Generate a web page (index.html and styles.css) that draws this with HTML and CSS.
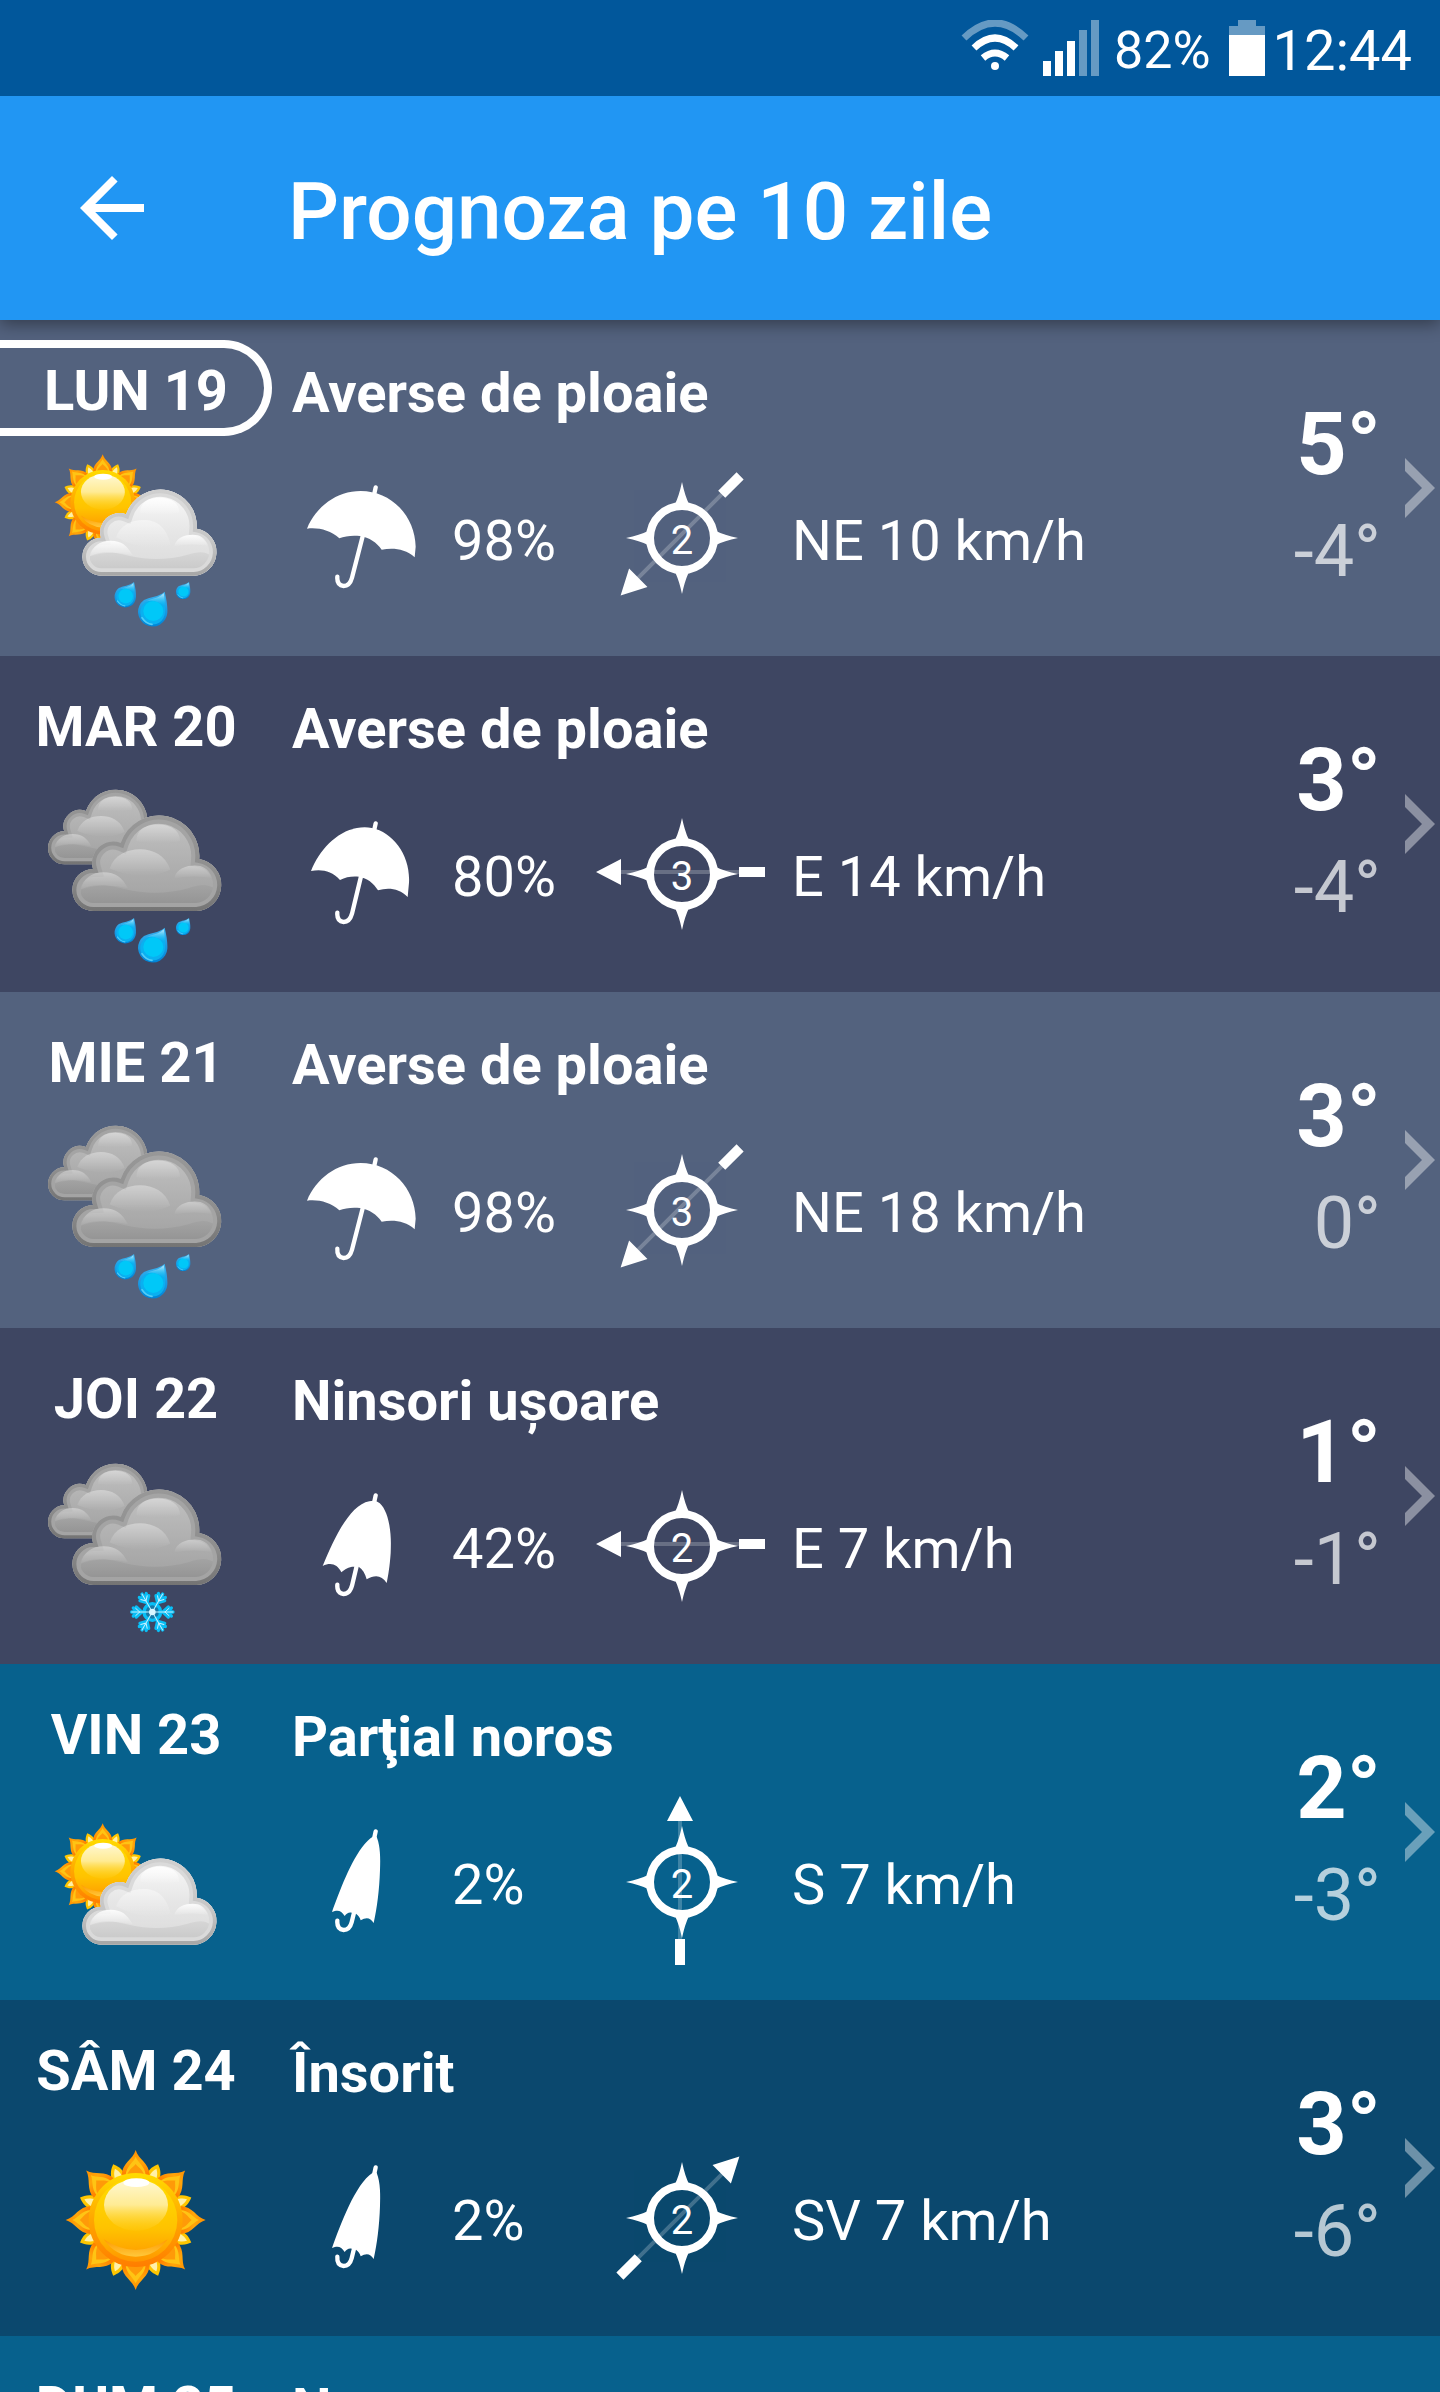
FILE: index.html
```html
<!DOCTYPE html>
<html lang="ro">
<head>
  <meta charset="UTF-8">
  <title>Prognoza pe 10 zile</title>
  <meta name="viewport" content="width=device-width, initial-scale=1.0">
  <link rel="stylesheet" href="styles.css">
</head>
<body>

  <!-- shared drawings -->
  <svg class="defs" aria-hidden="true">
    <defs>
      <linearGradient id="white-fill" x1="0" y1="0" x2="0" y2="1">
        <stop offset="0" stop-color="#fafafa"/>
        <stop offset="0.5" stop-color="#e6e6e6"/>
        <stop offset="1" stop-color="#dadada"/>
      </linearGradient>
      <linearGradient id="white-rim" x1="0" y1="0" x2="0" y2="257" gradientUnits="userSpaceOnUse">
        <stop offset="0" stop-color="#cfcfcf"/>
        <stop offset="0.6" stop-color="#c6c6c6"/>
        <stop offset="1" stop-color="#a6a6a6"/>
      </linearGradient>
      <linearGradient id="white-base" x1="0" y1="0" x2="0" y2="1">
        <stop offset="0" stop-color="#d6d6d6"/>
        <stop offset="1" stop-color="#c8c8c8"/>
      </linearGradient>
      <linearGradient id="gray-fill" x1="0" y1="0" x2="0" y2="1">
        <stop offset="0" stop-color="#c2c2c2"/>
        <stop offset="0.5" stop-color="#b0b0b0"/>
        <stop offset="1" stop-color="#a0a0a0"/>
      </linearGradient>
      <linearGradient id="gray-rim" x1="0" y1="0" x2="0" y2="257" gradientUnits="userSpaceOnUse">
        <stop offset="0" stop-color="#989898"/>
        <stop offset="0.6" stop-color="#8e8e8e"/>
        <stop offset="1" stop-color="#747474"/>
      </linearGradient>
      <linearGradient id="gray-base" x1="0" y1="0" x2="0" y2="1">
        <stop offset="0" stop-color="#a3a3a3"/>
        <stop offset="1" stop-color="#929292"/>
      </linearGradient>
      <linearGradient id="shine" x1="0" y1="0" x2="0" y2="1">
        <stop offset="0" stop-color="#fff" stop-opacity="0.9"/>
        <stop offset="1" stop-color="#fff" stop-opacity="0"/>
      </linearGradient>
      <linearGradient id="sun-rim" x1="0" y1="0" x2="0" y2="1">
        <stop offset="0" stop-color="#ffdc00"/>
        <stop offset="0.5" stop-color="#ffa600"/>
        <stop offset="1" stop-color="#ff7d00"/>
      </linearGradient>
      <linearGradient id="sun-disc" x1="0" y1="0" x2="0" y2="1">
        <stop offset="0" stop-color="#ffdd00"/>
        <stop offset="0.6" stop-color="#ffc300"/>
        <stop offset="1" stop-color="#ff9600"/>
      </linearGradient>
      <linearGradient id="sun-shine" x1="0" y1="0" x2="0" y2="1">
        <stop offset="0" stop-color="#fff8d2"/>
        <stop offset="0.5" stop-color="#ffeb94"/>
        <stop offset="1" stop-color="#ffcf20" stop-opacity="0.2"/>
      </linearGradient>
      <linearGradient id="sun-glow" x1="0" y1="0" x2="0" y2="1">
        <stop offset="0" stop-color="#ff9a00"/>
        <stop offset="1" stop-color="#ffc83c"/>
      </linearGradient>
      <linearGradient id="petal" x1="0" y1="-210" x2="0" y2="-140" gradientUnits="userSpaceOnUse">
        <stop offset="0" stop-color="#ff8e00"/>
        <stop offset="0.5" stop-color="#ffa60a"/>
        <stop offset="1" stop-color="#ff8200"/>
      </linearGradient>
      <linearGradient id="drop-edge" x1="0" y1="0" x2="0" y2="1">
        <stop offset="0" stop-color="#3cb4f0"/>
        <stop offset="1" stop-color="#0084d6"/>
      </linearGradient>
      <linearGradient id="drop-tip" x1="0" y1="0" x2="0" y2="1">
        <stop offset="0" stop-color="#c8ecfc"/>
        <stop offset="1" stop-color="#10bdf5" stop-opacity="0"/>
      </linearGradient>

      <path id="cloud-shape" d="M57 257A57 57 0 0 1 55 143A57 57 0 0 1 130 73A109 109 0 0 1 342 116A71 71 0 0 1 334 257Z"/>
      <clipPath id="cloud-clip"><use href="#cloud-shape"/></clipPath>

      <g id="cloud-white">
        <use href="#cloud-shape" fill="url(#white-fill)"/>
        <path d="M22 199C60 180 90 186 142 198C200 212 262 209 312 195C350 183 365 184 383 196V246H22Z" fill="url(#white-base)" clip-path="url(#cloud-clip)"/>
        <g clip-path="url(#cloud-clip)">
          <use href="#cloud-shape" fill="none" stroke="#dadada" stroke-width="44"/>
          <use href="#cloud-shape" fill="none" stroke="url(#white-rim)" stroke-width="22"/>
        </g>
        <path d="M172 68C172 38 196 23 230 23S290 38 290 68Q230 80 172 68Z" fill="url(#shine)"/>
        <path d="M100 142C112 106 146 90 182 90S250 106 264 165Q190 190 100 142Z" fill="url(#shine)" opacity="0.5"/>
        <path d="M22 200C28 168 52 152 84 152S134 166 150 196Q80 178 22 200Z" fill="url(#shine)"/>
        <path d="M274 170C280 142 308 134 330 134S366 142 378 168Q320 158 274 170Z" fill="url(#shine)"/>
      </g>

      <g id="cloud-gray">
        <use href="#cloud-shape" fill="url(#gray-fill)"/>
        <path d="M22 199C60 180 90 186 142 198C200 212 262 209 312 195C350 183 365 184 383 196V246H22Z" fill="url(#gray-base)" clip-path="url(#cloud-clip)"/>
        <g clip-path="url(#cloud-clip)">
          <use href="#cloud-shape" fill="none" stroke="#a4a4a4" stroke-width="44"/>
          <use href="#cloud-shape" fill="none" stroke="url(#gray-rim)" stroke-width="22"/>
        </g>
        <g opacity="0.4">
          <path d="M172 68C172 38 196 23 230 23S290 38 290 68Q230 80 172 68Z" fill="url(#shine)"/>
          <path d="M100 142C112 106 146 90 182 90S250 106 264 145Q190 180 100 142Z" fill="url(#shine)"/>
          <path d="M22 200C28 168 52 152 84 152S134 166 150 196Q80 178 22 200Z" fill="url(#shine)"/>
          <path d="M274 170C280 142 308 134 330 134S366 142 378 168Q320 158 274 170Z" fill="url(#shine)"/>
        </g>
      </g>

      <g id="ray">
        <path d="M0-210C9-180 40-172 42-135H-42C-40-172-9-180 0-210Z" fill="url(#petal)"/>
        <path d="M0-190C7-172 28-162 30-135H-30C-28-162-7-172 0-190Z" fill="#ffc414"/>
        <path d="M0-168C5-160 18-155 26-135H-26C-18-155-5-160 0-168Z" fill="#ff9a08"/>
      </g>
      <g id="small-ray">
        <path d="M0-180C10-170 20-160 22-132H-22C-20-160-10-170 0-180Z" fill="#ffc600"/>
        <path d="M0-166C6-158 10-152 12-134H-12C-10-152-6-158 0-166Z" fill="#fff0a8"/>
      </g>
      <g id="sun">
        <use href="#small-ray" transform="rotate(22)"/>
        <use href="#small-ray" transform="rotate(68)"/>
        <use href="#small-ray" transform="rotate(112)"/>
        <use href="#small-ray" transform="rotate(158)"/>
        <use href="#small-ray" transform="rotate(202)"/>
        <use href="#small-ray" transform="rotate(248)"/>
        <use href="#small-ray" transform="rotate(292)"/>
        <use href="#small-ray" transform="rotate(338)"/>
        <use href="#ray"/>
        <use href="#ray" transform="rotate(45)"/>
        <use href="#ray" transform="rotate(90)"/>
        <use href="#ray" transform="rotate(135)"/>
        <use href="#ray" transform="rotate(180)"/>
        <use href="#ray" transform="rotate(225)"/>
        <use href="#ray" transform="rotate(270)"/>
        <use href="#ray" transform="rotate(315)"/>
        <circle r="141" fill="url(#sun-rim)"/>
        <circle r="125" fill="url(#sun-disc)"/>
        <path d="M-96 58Q0 122 96 58Q60 110 0 110T-96 58Z" fill="url(#sun-glow)"/>
        <ellipse cx="1" cy="-45" rx="96" ry="77" fill="url(#sun-shine)"/>
        <ellipse cx="2" cy="-112" rx="39" ry="13" fill="#fff"/>
      </g>

      <g id="drop">
        <path d="M0 0C6 25 9 45 8 63A44 44 0 1 1-62 25C-48 17-16 15 0 0Z" fill="url(#drop-edge)"/>
        <path d="M-3 8C0 30 2 45 1 62A37 37 0 1 1-58 32C-44 24-16 22-3 8Z" fill="#0ab0f0"/>
        <circle cx="-34" cy="58" r="30" fill="#00c8f8"/>
        <path d="M-3 5C0 20 1 34 1 44Q-30 20-56 30C-44 22-16 20-3 5Z" fill="url(#drop-tip)"/>
        <path d="M-68 78Q-56 96-38 98" fill="none" stroke="#52ccf8" stroke-width="5" stroke-linecap="round"/>
      </g>
      <g id="drops">
        <use href="#drop" transform="translate(402 816) scale(0.73)"/>
        <use href="#drop" transform="translate(494 845)"/>
        <use href="#drop" transform="translate(567 816) scale(0.49)"/>
      </g>

      <g id="flake-arm">
        <path d="M22 0H62M32 0L48-15M32 0L48 15M44 0L57-12M44 0L57 12" fill="none" stroke="#08bff6" stroke-width="10" stroke-linecap="round"/>
        <path d="M0 0H62M38 0L50-11M38 0L50 11" fill="none" stroke="#c4f0ff" stroke-width="3" stroke-linecap="round"/>
      </g>
      <g id="snowflake">
        <circle r="25" fill="#1579a8" stroke="#08bff6" stroke-width="10"/>
        <use href="#flake-arm"/>
        <use href="#flake-arm" transform="rotate(60)"/>
        <use href="#flake-arm" transform="rotate(120)"/>
        <use href="#flake-arm" transform="rotate(180)"/>
        <use href="#flake-arm" transform="rotate(240)"/>
        <use href="#flake-arm" transform="rotate(300)"/>
        <circle r="10" fill="#d8f6ff"/>
      </g>
    </defs>

    <!-- weather -->
    <symbol id="w-sun-rain" viewBox="120 390 576 576">
      <use href="#sun" transform="translate(308 577) scale(0.686)"/>
      <use href="#cloud-white" transform="translate(248 540)"/>
      <use href="#drops"/>
    </symbol>
    <symbol id="w-rain" viewBox="120 390 576 576">
      <use href="#cloud-gray" transform="translate(145 432) scale(0.868)"/>
      <use href="#cloud-gray" transform="translate(218 510) scale(1.11)"/>
      <use href="#drops"/>
    </symbol>
    <symbol id="w-snow" viewBox="120 354 576 576">
      <use href="#cloud-gray" transform="translate(145 402) scale(0.868)"/>
      <use href="#cloud-gray" transform="translate(218 480) scale(1.11)"/>
      <use href="#snowflake" transform="translate(457 846)"/>
    </symbol>
    <symbol id="w-sun-cloud" viewBox="120 342 576 576">
      <use href="#sun" transform="translate(308 604) scale(0.686)"/>
      <use href="#cloud-white" transform="translate(248 567)"/>
    </symbol>
    <symbol id="w-sun" viewBox="120 90 576 576">
      <use href="#sun" transform="translate(407 390)"/>
    </symbol>

    <!-- umbrellas, from open to folded -->
    <symbol id="u-open" viewBox="876 498 408 360">
      <path d="M921 656C948 590 1010 543 1082 543C1175 543 1246 620 1247 710L1244 742C1215 716 1180 713 1145 719C1130 698 1108 682 1080 678C1055 676 1035 678 1018 685C990 660 955 652 921 656Z"/>
      <path class="stick" d="M1127 532L1121 560M1089 675L1056 803Q1049 828 1031 828Q1010 826 1012 800"/>
    </symbol>
    <symbol id="u-wide" viewBox="876 456 408 360">
      <path d="M933 633C960 565 1020 502 1094 502C1170 502 1232 580 1227 668L1223 711C1198 686 1166 682 1134 691C1120 668 1102 655 1077 650C1055 648 1038 651 1020 660C995 632 965 627 933 633Z"/>
      <path class="stick" d="M1127 490L1121 518M1084 645L1056 761Q1049 786 1031 786Q1010 784 1012 758"/>
    </symbol>
    <symbol id="u-half" viewBox="876 462 408 360">
      <path d="M968 708C1005 618 1055 512 1120 512C1158 512 1178 590 1172 670C1169 710 1165 735 1160 759C1145 735 1125 733 1100 748C1095 730 1088 718 1076 710H1062C1045 710 1035 718 1024 727C1012 702 992 696 968 708Z"/>
      <path class="stick" d="M1127 496L1121 524M1072 700L1056 767Q1049 792 1031 792Q1010 790 1012 764"/>
    </symbol>
    <symbol id="u-folded" viewBox="876 450 408 360">
      <path d="M996 726C1022 655 1065 535 1118 500H1130C1142 530 1141 570 1140 600C1138 660 1131 715 1121 759C1111 742 1098 741 1082 751C1080 742 1074 735 1068 731L1055 728C1046 726 1040 730 1034 738C1024 722 1014 718 996 726Z"/>
      <path class="stick" d="M1127 484L1121 512M1062 728L1055 757Q1049 780 1031 780Q1010 778 1012 752"/>
    </symbol>

    <!-- wind -->
    <symbol id="arrow" viewBox="-88 -88 176 176">
      <path d="M0-60V60" stroke="#fff" stroke-width="4" opacity="0.22"/>
      <path d="M0-84L13-59H-13ZM-5 59H5V85H-5Z" fill="#fff"/>
    </symbol>
    <symbol id="compass" viewBox="-88 -88 176 176">
      <g transform="translate(2 2)" fill="#fff">
        <circle r="32" fill="none" stroke="#fff" stroke-width="8"/>
        <path d="M0-56Q3-42 7-34H-7Q-3-42 0-56ZM0 56Q3 42 7 34H-7Q-3 42 0 56ZM-56 0Q-42-3-34-7V7Q-42 3-56 0ZM56 0Q42-3 34-7V7Q42 3 56 0Z"/>
      </g>
    </symbol>
    <symbol id="chevron" viewBox="0 0 30 60">
      <path d="M0 0L30 30L0 60V47L17 30L0 13Z"/>
    </symbol>
  </svg>

  <div class="app">
    <div class="status-bar">
      <svg class="wifi" viewBox="0 0 68 56" aria-label="Wi-Fi">
        <path d="M3 18Q34-12 65 18" stroke-width="7" opacity="0.4"/>
        <path d="M13 28Q34 8 55 28M22 38Q34 28 46 38" stroke-width="7"/>
        <circle cx="34" cy="46" r="4"/>
      </svg>
      <svg class="signal" viewBox="0 0 56 56" aria-label="Semnal">
        <path d="M0 41H8V56H0ZM12 31H20V56H12ZM24 21H32V56H24Z"/>
        <path d="M36 10H44V56H36ZM48 0H56V56H48Z" opacity="0.4"/>
      </svg>
      <span class="battery-level">82%</span>
      <svg class="battery" viewBox="0 0 36 56" aria-label="Baterie">
        <path d="M9 0H27V6H36V15H0V6H9Z" opacity="0.4"/>
        <path d="M0 15H36V56H0Z"/>
      </svg>
      <span class="clock">12:44</span>
    </div>

    <header class="app-bar">
      <button class="back" type="button" aria-label="Înapoi">
        <svg viewBox="0 0 24 24"><path d="M20 11H7.8l5.6-5.6L12 4l-8 8 8 8 1.4-1.4L7.8 13H20z"/></svg>
      </button>
      <h1>Prognoza pe 10 zile</h1>
    </header>

    <ul class="days">
      <li>
        <a class="day slate" href="#lun-19">
          <div class="date">
            <span class="date-label today">LUN 19</span>
            <svg class="weather"><use href="#w-sun-rain"/></svg>
          </div>
          <div class="details">
            <h2>Averse de ploaie</h2>
            <div class="metrics">
              <svg class="umbrella"><use href="#u-open"/></svg>
              <span>98%</span>
              <svg class="wind" viewBox="-88 -88 176 176">
                <use class="from-ne" href="#arrow" x="-88" y="-88" width="176" height="176"/>
                <use href="#compass" x="-88" y="-88" width="176" height="176"/>
                <text x="2" y="18">2</text>
              </svg>
              <span>NE 10 km/h</span>
            </div>
          </div>
          <div class="temps">
            <span class="high">5°</span>
            <span class="low">-4°</span>
          </div>
          <svg class="chevron"><use href="#chevron"/></svg>
        </a>
      </li>
      <li>
        <a class="day indigo" href="#mar-20">
          <div class="date">
            <span class="date-label">MAR 20</span>
            <svg class="weather"><use href="#w-rain"/></svg>
          </div>
          <div class="details">
            <h2>Averse de ploaie</h2>
            <div class="metrics">
              <svg class="umbrella"><use href="#u-wide"/></svg>
              <span>80%</span>
              <svg class="wind" viewBox="-88 -88 176 176">
                <use class="from-e" href="#arrow" x="-88" y="-88" width="176" height="176"/>
                <use href="#compass" x="-88" y="-88" width="176" height="176"/>
                <text x="2" y="18">3</text>
              </svg>
              <span>E 14 km/h</span>
            </div>
          </div>
          <div class="temps">
            <span class="high">3°</span>
            <span class="low">-4°</span>
          </div>
          <svg class="chevron"><use href="#chevron"/></svg>
        </a>
      </li>
      <li>
        <a class="day slate" href="#mie-21">
          <div class="date">
            <span class="date-label">MIE 21</span>
            <svg class="weather"><use href="#w-rain"/></svg>
          </div>
          <div class="details">
            <h2>Averse de ploaie</h2>
            <div class="metrics">
              <svg class="umbrella"><use href="#u-open"/></svg>
              <span>98%</span>
              <svg class="wind" viewBox="-88 -88 176 176">
                <use class="from-ne" href="#arrow" x="-88" y="-88" width="176" height="176"/>
                <use href="#compass" x="-88" y="-88" width="176" height="176"/>
                <text x="2" y="18">3</text>
              </svg>
              <span>NE 18 km/h</span>
            </div>
          </div>
          <div class="temps">
            <span class="high">3°</span>
            <span class="low">0°</span>
          </div>
          <svg class="chevron"><use href="#chevron"/></svg>
        </a>
      </li>
      <li>
        <a class="day indigo" href="#joi-22">
          <div class="date">
            <span class="date-label">JOI 22</span>
            <svg class="weather"><use href="#w-snow"/></svg>
          </div>
          <div class="details">
            <h2>Ninsori ușoare</h2>
            <div class="metrics">
              <svg class="umbrella"><use href="#u-half"/></svg>
              <span>42%</span>
              <svg class="wind" viewBox="-88 -88 176 176">
                <use class="from-e" href="#arrow" x="-88" y="-88" width="176" height="176"/>
                <use href="#compass" x="-88" y="-88" width="176" height="176"/>
                <text x="2" y="18">2</text>
              </svg>
              <span>E 7 km/h</span>
            </div>
          </div>
          <div class="temps">
            <span class="high">1°</span>
            <span class="low">-1°</span>
          </div>
          <svg class="chevron"><use href="#chevron"/></svg>
        </a>
      </li>
      <li>
        <a class="day teal" href="#vin-23">
          <div class="date">
            <span class="date-label">VIN 23</span>
            <svg class="weather"><use href="#w-sun-cloud"/></svg>
          </div>
          <div class="details">
            <h2>Parţial noros</h2>
            <div class="metrics">
              <svg class="umbrella"><use href="#u-folded"/></svg>
              <span>2%</span>
              <svg class="wind" viewBox="-88 -88 176 176">
                <use href="#arrow" x="-88" y="-88" width="176" height="176"/>
                <use href="#compass" x="-88" y="-88" width="176" height="176"/>
                <text x="2" y="18">2</text>
              </svg>
              <span>S 7 km/h</span>
            </div>
          </div>
          <div class="temps">
            <span class="high">2°</span>
            <span class="low">-3°</span>
          </div>
          <svg class="chevron"><use href="#chevron"/></svg>
        </a>
      </li>
      <li>
        <a class="day navy" href="#sam-24">
          <div class="date">
            <span class="date-label">SÂM 24</span>
            <svg class="weather"><use href="#w-sun"/></svg>
          </div>
          <div class="details">
            <h2>Însorit</h2>
            <div class="metrics">
              <svg class="umbrella"><use href="#u-folded"/></svg>
              <span>2%</span>
              <svg class="wind" viewBox="-88 -88 176 176">
                <use class="from-sv" href="#arrow" x="-88" y="-88" width="176" height="176"/>
                <use href="#compass" x="-88" y="-88" width="176" height="176"/>
                <text x="2" y="18">2</text>
              </svg>
              <span>SV 7 km/h</span>
            </div>
          </div>
          <div class="temps">
            <span class="high">3°</span>
            <span class="low">-6°</span>
          </div>
          <svg class="chevron"><use href="#chevron"/></svg>
        </a>
      </li>
      <li>
        <a class="day teal" href="#dum-25">
          <div class="date">
            <span class="date-label">DUM 25</span>
          </div>
          <div class="details">
            <h2>Noros</h2>
          </div>
        </a>
      </li>
    </ul>
  </div>

</body>
</html>
```
FILE: styles.css
```css
html, body {
  height: 100%;
}
body {
  background: #53627e;
  color: #fff;
  font-family: Roboto, "Liberation Sans", sans-serif;
  font-size: 56px;
  margin: 0;
  overflow: hidden;
}
h1, h2, ul {
  font-size: inherit;
  margin: 0;
  padding: 0;
}
svg {
  display: block;
  fill: #fff;
  flex: none;
}
.defs {
  height: 0;
  position: absolute;
  width: 0;
}
.app {
  display: flex;
  flex-direction: column;
  height: 100vh;
}

/*status bar*/
.status-bar {
  align-items: center;
  background: #01579b;
  display: flex;
  flex: none;
  height: 96px;
  justify-content: flex-end;
  padding-right: 28px;
  position: relative;
  z-index: 2;
}
.wifi {
  height: 56px;
  margin-right: 14px;
  stroke: #fff;
  width: 68px;
}
.wifi path {
  fill: none;
}
.wifi circle {
  stroke: none;
}
.signal {
  height: 56px;
  margin-right: 15px;
  width: 56px;
}
.battery {
  height: 56px;
  margin: 0 8px 0 18px;
  width: 36px;
}
.battery-level, .clock {
  padding-top: 5px;
}
.battery-level {
  font-size: 52px;
}

/*title bar*/
.app-bar {
  align-items: center;
  background: #2196f3;
  box-shadow: 0 4px 16px rgba(0,0,0,0.4);
  display: flex;
  flex: none;
  height: 224px;
  padding-left: 64px;
  position: relative;
  z-index: 1;
}
.app-bar h1 {
  font-size: 80px;
  font-weight: 500;
  margin-left: 128px;
  padding-top: 8px;
}
.back {
  background: none;
  border: 0;
  cursor: pointer;
  height: 96px;
  padding: 0;
  width: 96px;
}

/*list of days*/
.days {
  flex: 1;
  list-style: none;
  overflow-y: auto;
  scrollbar-width: none;
}
.day {
  align-items: flex-start;
  color: #fff;
  display: flex;
  height: 336px;
  padding-right: 5px;
  text-decoration: none;
}
.slate {
  background: #53627e;
}
.indigo {
  background: #3e4662;
}
.teal {
  background: #07618d;
}
.navy {
  background: #0b486e;
}

.date {
  align-items: center;
  display: flex;
  flex: none;
  flex-direction: column;
  padding-top: 20px;
  width: 272px;
}
.date-label {
  border: 8px solid transparent;
  border-left: 0;
  border-right: 0;
  box-sizing: border-box;
  font-weight: 700;
  height: 96px;
  line-height: 86px;
  text-align: center;
  width: 100%;
}
.today {
  border-color: #fff;
  border-radius: 0 48px 48px 0;
  border-right: 8px solid #fff;
  padding-left: 8px;
}
.weather {
  height: 192px;
  margin-top: 4px;
  width: 192px;
}

.details {
  flex: 1;
  padding: 40px 0 0 20px;
}
.details h2 {
  font-weight: 700;
  line-height: 66px;
}
.metrics {
  align-items: center;
  column-gap: 24px;
  display: grid;
  grid-template-columns: 136px 116px 176px 1fr;
  margin-top: 22px;
}
.metrics span {
  padding-top: 10px;
}
.umbrella {
  height: 120px;
  width: 136px;
}
.stick {
  fill: none;
  stroke: #fff;
  stroke-linecap: round;
  stroke-width: 13;
}
.wind {
  height: 176px;
  width: 176px;
}
.wind text {
  font-size: 40px;
  text-anchor: middle;
}
.from-ne {
  transform: rotate(225deg);
}
.from-e {
  transform: rotate(270deg);
}
.from-sv {
  transform: rotate(45deg);
}

.temps {
  display: flex;
  flex-direction: column;
  gap: 12px;
  padding-top: 72px;
  text-align: right;
}
.high {
  font-size: 88px;
  font-weight: 700;
  line-height: 104px;
}
.low {
  font-size: 72px;
  line-height: 88px;
  opacity: 0.7;
}
.chevron {
  align-self: center;
  height: 60px;
  margin-left: 24px;
  opacity: 0.4;
  width: 30px;
}
```
